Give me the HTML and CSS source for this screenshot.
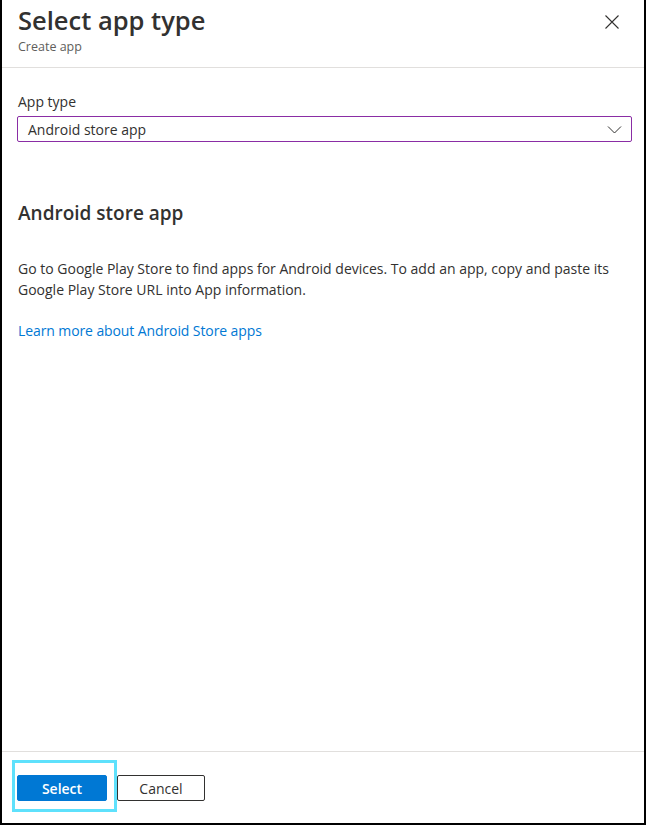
FILE: index.html
```html
<!DOCTYPE html>
<html lang="en">
<head>
<meta charset="utf-8">
<title>Select app type</title>
<link rel="stylesheet" href="styles.css">
</head>
<body>
<div class="panel">
  <header class="header">
    <div class="titles">
      <h1 class="title">Select app type</h1>
      <div class="subtitle">Create app</div>
    </div>
    <button class="close" aria-label="Close">
      <svg width="16" height="16" viewBox="0 0 16 16"><path d="M1.5 1.5 L14.5 14.5 M14.5 1.5 L1.5 14.5" stroke="#323130" stroke-width="1.1" fill="none"/></svg>
    </button>
  </header>
  <main class="content">
    <label class="field-label">App type</label>
    <div class="select">
      <span class="select-value">Android store app</span>
      <svg class="chevron" width="15" height="9" viewBox="0 0 15 9"><path d="M1 1.5 L7.5 8 L14 1.5" stroke="#323130" stroke-width="1" fill="none"/></svg>
    </div>
    <h2 class="section-title">Android store app</h2>
    <p class="desc">Go to Google Play Store to find apps for Android devices. To add an app, copy and paste its Google Play Store URL into App information.</p>
    <a class="link" href="#">Learn more about Android Store apps</a>
  </main>
  <footer class="footer">
    <div class="focus-ring"><button class="btn primary">Select</button></div>
    <button class="btn secondary">Cancel</button>
  </footer>
</div>
</body>
</html>
```
FILE: styles.css
```css
* { box-sizing: border-box; }
html, body { margin: 0; padding: 0; background: #000; }
body { font-family: "Open Sans", "Noto Sans", sans-serif; color: #323130; }
.panel {
  width: 646px;
  height: 825px;
  background: #fff;
  border-left: 2px solid #000;
  border-right: 2px solid #000;
  border-bottom: 2px solid #000;
  display: flex;
  flex-direction: column;
}
.header {
  display: flex;
  justify-content: space-between;
  align-items: flex-start;
  padding: 3px 16px 0 16px;
  height: 68px;
  border-bottom: 1px solid #e1dfdd;
}
.title {
  margin: 0;
  font-size: 25.5px;
  font-weight: 600;
  line-height: 35px;
  color: #323130;
}
.subtitle {
  font-size: 12.5px;
  color: #605e5c;
  line-height: 16px;
  margin-top: 1px;
}
.close {
  background: none;
  border: 0;
  padding: 0;
  margin-top: 11px;
  margin-right: 8px;
  width: 16px;
  height: 16px;
}
.content {
  flex: 1;
  padding: 24px 12px 0 15px;
}
.field-label {
  display: block;
  font-size: 14px;
  line-height: 20px;
  margin-bottom: 4px;
  margin-left: 1px;
}
.select {
  height: 26px;
  border: 1px solid #8a2da5;
  border-radius: 2px;
  display: flex;
  align-items: center;
  justify-content: space-between;
  padding: 0 9px 0 10px;
}
.select-value { font-size: 14px; }
.chevron { margin-top: 0; }
.section-title {
  margin: 57px 0 0 1px;
  font-size: 19px;
  font-weight: 600;
  line-height: 28px;
}
.desc {
  margin: 31px 0 0 1px;
  font-size: 14px;
  line-height: 21px;
}
.link {
  display: inline-block;
  margin: 21px 0 0 1px;
  font-size: 14px;
  line-height: 20px;
  color: #0078d4;
  text-decoration: none;
  letter-spacing: -0.1px;
}
.footer {
  height: 72px;
  border-top: 1px solid #e1dfdd;
  display: flex;
  align-items: flex-start;
  padding: 8px 0 0 10px;
}
.focus-ring {
  border: 3px solid #5ee1fc;
  padding: 12px 7px 8px 2px;
}
.btn {
  font-family: inherit;
  font-size: 14px;
  height: 26px;
  border-radius: 2px;
  padding: 0;
}
.primary {
  width: 90px;
  background: #0078d4;
  color: #fff;
  border: 1px solid #0078d4;
  font-weight: 600;
}
.secondary {
  margin-top: 15px;
  width: 88px;
  background: #fff;
  color: #323130;
  border: 1px solid #323130;
}
```
